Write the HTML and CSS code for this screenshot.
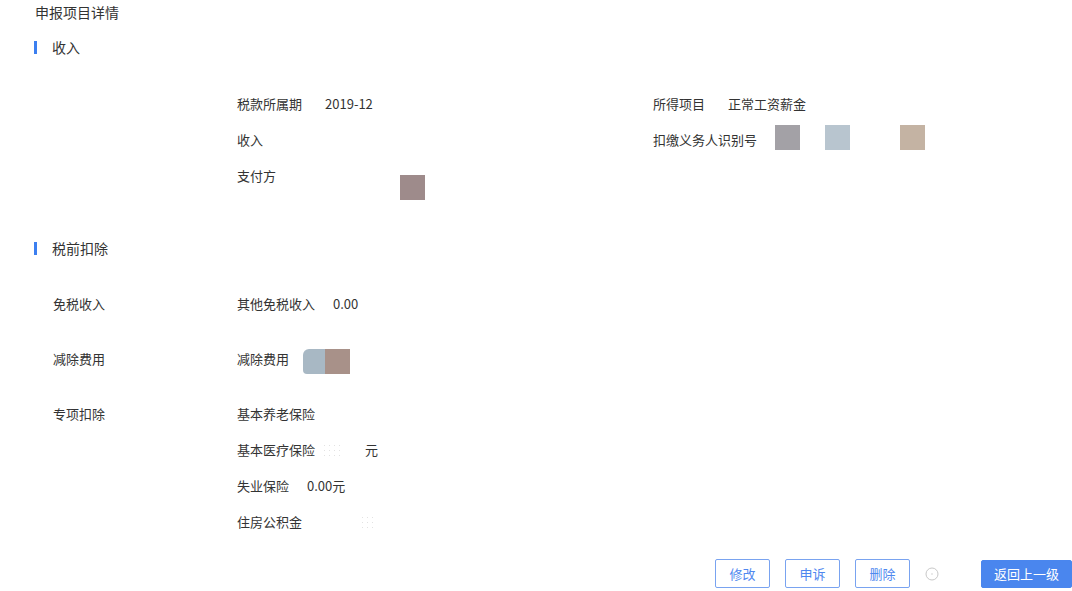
FILE: index.html
```html
<!DOCTYPE html>
<html lang="zh-CN">
<head>
<meta charset="utf-8">
<title>申报项目详情</title>
<link rel="stylesheet" href="styles.css">
</head>
<body>
<div class="page">
  <div class="title">申报项目详情</div>

  <div class="sec-head"><span class="bar"></span>收入</div>
  <div class="info-grid">
    <div class="cell"><span class="lbl">税款所属期</span><span class="val">2019-12</span></div>
    <div class="cell"><span class="lbl">所得项目</span><span class="val">正常工资薪金</span></div>
    <div class="cell"><span class="lbl">收入</span></div>
    <div class="cell"><span class="lbl">扣缴义务人识别号</span><span class="blk b1"></span><span class="blk b2"></span><span class="blk b3"></span></div>
    <div class="cell cell-top"><span class="lbl">支付方</span><span class="blk b4"></span></div>
    <div class="cell"></div>
  </div>

  <div class="sec-head sec2"><span class="bar"></span>税前扣除</div>

  <div class="group g1">
    <div class="cat">免税收入</div>
    <div class="items">
      <div class="item"><span class="lbl">其他免税收入</span><span class="val v2">0.00</span></div>
    </div>
  </div>

  <div class="group">
    <div class="cat">减除费用</div>
    <div class="items">
      <div class="item"><span class="lbl">减除费用</span><span class="blk b5"></span><span class="blk b6"></span></div>
    </div>
  </div>

  <div class="group">
    <div class="cat">专项扣除</div>
    <div class="items">
      <div class="item"><span class="lbl">基本养老保险</span></div>
      <div class="item"><span class="lbl">基本医疗保险</span><span class="noise n1"></span><span class="val v3">元</span></div>
      <div class="item"><span class="lbl">失业保险</span><span class="val v2">0.00元</span></div>
      <div class="item"><span class="lbl">住房公积金</span><span class="noise n2"></span></div>
    </div>
  </div>

  <div class="actions">
    <button class="btn">修改</button>
    <button class="btn">申诉</button>
    <button class="btn">删除</button>
    <svg class="spin" width="14" height="14" viewBox="0 0 14 14"><circle cx="7" cy="7" r="6" fill="none" stroke="#c8c8c8" stroke-width="1"/><circle cx="7" cy="7" r="0.8" fill="#d0d0d0"/></svg>
    <button class="btn primary">返回上一级</button>
  </div>
</div>
</body>
</html>
```

FILE: styles.css
```css
* { box-sizing: border-box; }
html, body { margin: 0; padding: 0; background: #fff; }
body {
  font-family: "Noto Sans CJK SC", "Noto Sans", "Liberation Sans", sans-serif;
  color: #333;
  font-size: 13px;
  width: 1072px;
  height: 591px;
  overflow: hidden;
}
.page { display: flex; flex-direction: column; }

.title {
  height: 24px;
  line-height: 24px;
  font-size: 14px;
  padding-left: 35px;
}

.sec-head {
  display: flex;
  align-items: center;
  height: 24px;
  margin-top: 11px;
  padding-left: 34px;
  font-size: 14px;
}
.sec-head .bar {
  width: 3px;
  height: 13px;
  background: #3c7ff0;
  margin-right: 15px;
}
.sec-head.sec2 { margin-top: 42px; }

.info-grid {
  display: grid;
  grid-template-columns: 416px 1fr;
  grid-auto-rows: 36px;
  margin-top: 27px;
  padding-left: 237px;
}
.cell {
  display: flex;
  align-items: center;
  height: 36px;
  line-height: 36px;
}
.cell-top { align-items: flex-start; }
.val { margin-left: 23px; }
.v2 { margin-left: 18px; }
.v3 { margin-left: 21px; }

.blk { display: inline-block; width: 25px; height: 25px; }
.b1 { background: #a3a1a6; margin-left: 18px; margin-top: -6px; }
.b2 { background: #b8c5cf; margin-left: 25px; margin-top: -6px; }
.b3 { background: #c4b3a3; margin-left: 50px; margin-top: -6px; }
.b4 { background: #9e8b8b; margin-left: 124px; margin-top: 17px; }
.b5 { background: #a8b8c4; margin-left: 14px; width: 22px; border-radius: 6px 0 0 4px; margin-top: 5px; }
.b6 { background: #a89189; margin-top: 5px; }

.group {
  display: flex;
  margin-top: 19px;
  padding-left: 53px;
}
.group.g1 { margin-top: 26px; }
.cat {
  width: 184px;
  height: 36px;
  line-height: 36px;
}
.items { display: flex; flex-direction: column; }
.item {
  display: flex;
  align-items: center;
  height: 36px;
  line-height: 36px;
}
.noise {
  display: inline-block;
  height: 14px;
  background-image: radial-gradient(circle, #d6d6d6 0.8px, transparent 1px);
  background-size: 5px 5px;
  opacity: 0.7;
}
.n1 { width: 22px; margin-left: 7px; }
.n2 { width: 14px; margin-left: 58px; }

.actions {
  display: flex;
  align-items: center;
  justify-content: flex-end;
  gap: 15px;
  margin-top: 19px;
}
.btn {
  font-family: inherit;
  font-size: 13px;
  height: 29px;
  width: 55px;
  padding: 0;
  background: #fff;
  color: #4f88ef;
  border: 1px solid #79a3f0;
  border-radius: 2px;
}
.spin { margin-right: 27px; flex: none; }
.primary {
  width: 91px;
  height: 28px;
  background: #4a86ee;
  border-color: #4a86ee;
  color: #fff;
}
```
